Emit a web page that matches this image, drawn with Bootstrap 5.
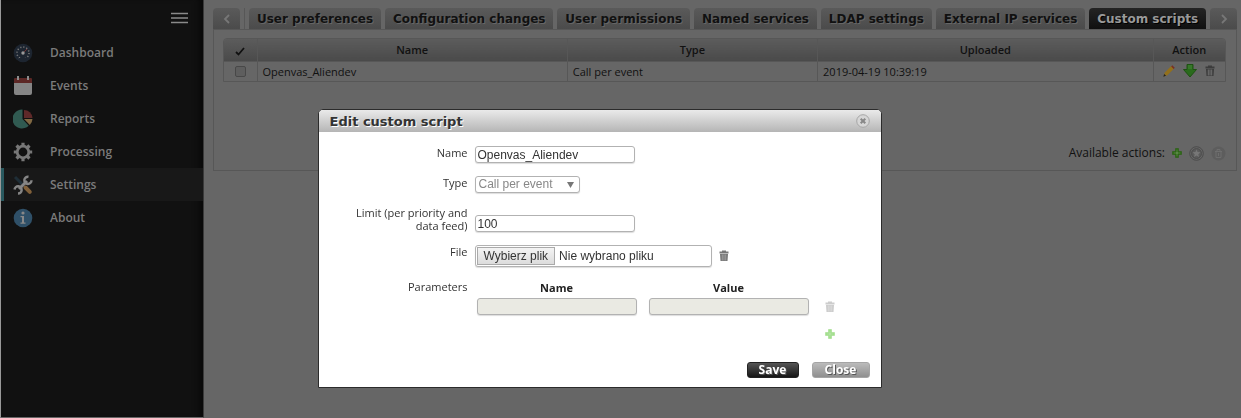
<!DOCTYPE html>
<html lang="en">
<head>
<meta charset="utf-8">
<meta name="viewport" content="width=device-width, initial-scale=1">
<title>Settings – Custom scripts</title>
<link href="https://cdn.jsdelivr.net/npm/bootstrap@5.3.0/dist/css/bootstrap.min.css" rel="stylesheet">
<style>
body{background:#666;color:#111;font:11px/13px "Open Sans","Noto Sans",sans-serif}
/* sidebar */
.side{width:204px;background:#111;border-left:1px solid #999;border-right:1px solid #3a3a3a;border-bottom:1px solid #666;box-shadow:inset -8px 0 6px -4px #0a0a0a}
.burger{height:36px;padding:0 15px 0 0}
.burger button,.icon-btn{background:none;border:0;padding:0;line-height:0}
.side .nav-link{height:33px;gap:17px;padding:0 0 0 12px;color:#7b7b7b;font-size:12px;font-weight:600;line-height:16px}
.side .nav-link.active{background:#181818;border-left:3px solid #29595f;padding-left:9px}
.side svg{flex:none}
/* tabs */
.work{padding:8px 4px 0 9px;min-width:0}
.tabs{gap:4px}
.tabs .nav-link{height:21px;padding:0 7px;border:0;border-radius:4px 4px 0 0;background:linear-gradient(#5a5a5a,#4b4b4b);color:#111;font:bold 12px/22px "DejaVu Sans",Verdana,sans-serif;white-space:nowrap;text-shadow:1px 1px 0 #666}
.tabs .nav-link.active{background:linear-gradient(#242424,#101010);color:#999;text-shadow:1px 1px 0 #000}
.tabs .step{width:27px;flex:none;padding:0;line-height:0}
.tabs .split{border-left:1px solid #575757}
.pane{border:1px solid #575757;padding:8px 10px 9px 9px;min-height:142px}
/* script list */
.list{border:1px solid #575757;border-radius:4px 4px 0 0;overflow:hidden}
.list table{table-layout:fixed;width:100%}
.list th{height:22px;background:linear-gradient(#5c5c5c,#4a4a4a);font-weight:600;text-align:center;border-bottom:1px solid #575757}
.list td{height:20px;padding:0 5px}
.list th+th,.list td+td{border-left:1px solid #575757}
.c-tick{width:33px}.c-name{width:31%}.c-type{width:25%}.c-act{width:72px}
.list input{appearance:none;width:11px;height:11px;border:1px solid #484848;border-radius:2px;background:#5e5e5e;display:block;margin:auto}
.avail{gap:7px;font-size:12px;line-height:16px}
/* dialog */
.veil{padding:109px 42px 0 0;pointer-events:none}
.dlg{width:564px;border:1px solid #2b2b2b;border-radius:5px 5px 0 0;background:#fff;overflow:hidden;pointer-events:auto}
.dlg-head{height:22px;padding:0 11px;background:linear-gradient(#eaeaea,#b5b5b5)}
.dlg-head h1{font:bold 13px/21px "DejaVu Sans",Verdana,sans-serif;color:#333;margin:0;text-shadow:1px 1px 0 #fff}
.dlg-body{padding:14px 11px 9px 0;gap:13px;color:#333}
.line{gap:7px}
.line>.cap{width:149px;padding-left:28px;text-align:right;flex:none}
.field{height:17px;width:160px;padding:0 2px;border:1px solid #b2b2b2;border-radius:3px;font:12px/15px "Liberation Sans",Arial,sans-serif;color:#333;background:#fff;box-shadow:0 1px 1px #ddd}
.field:disabled{background-color:#eaeae3}
select.field{width:105px;appearance:none;padding:0 3px;opacity:1}
select.field:disabled{color:#888;background:#fff url("data:image/svg+xml,%3Csvg xmlns='http://www.w3.org/2000/svg' width='7' height='6'%3E%3Cpath fill='%23777' d='M0 0h7L3.500 6z'/%3E%3C/svg%3E") no-repeat right 5px center}
.picker{height:22px;width:237px;padding:1px;gap:4px}
.picker .pick{border:1px solid #aaa;background:linear-gradient(#f4f4f4,#dcdcdc);padding:0 6px;height:18px;line-height:17px}
.params{gap:2px 12px;grid-template-columns:160px 160px 1fr;margin-left:2px}
.params b{line-height:16px;text-align:center;color:#222}
.act{height:16px;border:1px solid #888;border-radius:3px;padding:0;color:#fff;font:bold 12px/14px "Open Sans","Noto Sans",sans-serif;text-shadow:1px 1px 0 #555}
.save{width:52px;border-color:#222;background:linear-gradient(#555,#161616)}
.close-act{width:58px;border-color:#a5a5a5;background:linear-gradient(#bbb,#8f8f8f)}
.acts{gap:13px;margin-top:10px}
</style>
</head>
<body>
<svg class="d-none">
<symbol id="bin" viewBox="0 0 10 12"><path d="M3 1.500V.5h4v1h2.500v2h-9v-2zM1 4h8l-.5 7h-7z"/><path d="M3.300 4.500v6M5 4.500v6M6.700 4.500v6" stroke="#fff" stroke-opacity=".35" stroke-width=".8"/></symbol>
<symbol id="plus" viewBox="0 0 10 10"><path d="M3.500.5h3v3h3v3h-3v3h-3v-3h-3v-3h3z" fill="currentColor" stroke="currentColor" stroke-opacity=".5"/><path d="M5 1.500v7M1.500 5h7" stroke="#fff" stroke-opacity=".25"/></symbol>
</svg>
<div class="d-flex min-vh-100">
<aside class="side flex-shrink-0">
  <div class="burger d-flex justify-content-end align-items-center"><button aria-label="Toggle menu"><svg width="17" height="12"><path d="M0 1.500h17M0 6h17M0 10.500h17" stroke="#8a8a8a" stroke-width="1.500"/></svg></button></div>
  <nav class="nav flex-column">
    <a class="nav-link d-flex align-items-center" href="#"><svg width="20" height="20" viewBox="0 0 20 20"><circle cx="10" cy="10" r="9.300" fill="#1d2530"/><circle cx="10" cy="10" r="6" fill="none" stroke="#777" stroke-width="1.500" stroke-dasharray="1.200 2" pathLength="38"/><path d="M6 15h8v2H6z" fill="#1d2530"/><path d="m10 10 4-4" stroke="#703232"/><circle cx="10" cy="10" r="1.700" fill="#999"/></svg>Dashboard</a>
    <a class="nav-link d-flex align-items-center" href="#"><svg width="20" height="20" viewBox="0 0 20 20"><path d="M1 3q0-1 1-1h16q1 0 1 1v5H1z" fill="#5c2725"/><path d="M1 7h18v10q0 2-2 2H3q-2 0-2-2z" fill="#858585"/><path d="M5 0v4M15 0v4" stroke="#8c8c8c" stroke-width="2"/></svg>Events</a>
    <a class="nav-link d-flex align-items-center" href="#"><svg width="20" height="20" viewBox="0 0 20 20"><path d="M9.500.5a9.500 9.500 0 1 0 6.200 16.200L9.500 10z" fill="#305a51"/><path d="M11 1v8h8.500A8.500 8.500 0 0 0 11 1z" fill="#5e2929"/><path d="M11 10h8.500q-.2 3.500-2.700 6z" fill="#806843"/></svg>Reports</a>
    <a class="nav-link d-flex align-items-center" href="#"><svg width="20" height="20" viewBox="0 0 20 20"><path d="M10 .8v18.400M.8 10h18.400M3.500 3.500l13 13M16.500 3.500l-13 13" stroke="#777" stroke-width="3.200"/><circle cx="10" cy="10" r="5.800" fill="#111" stroke="#777" stroke-width="2.800"/></svg>Processing</a>
    <a class="nav-link active d-flex align-items-center" href="#" aria-current="page"><svg width="20" height="20" viewBox="0 0 20 20"><path d="m2 2 7 7" stroke="#1f2e37" stroke-width="3"/><path d="m12.500 12.500 4.300 4.300" stroke="#80603a" stroke-width="4" stroke-linecap="round"/><path d="M6 14 14 6" stroke="#858585" stroke-width="3"/><path d="M15.500 1.800a3.600 3.600 0 1 0 3 3.500M1.500 14.500a3.600 3.600 0 1 1 3.500 4" fill="none" stroke="#858585" stroke-width="2.400"/></svg>Settings</a>
    <a class="nav-link d-flex align-items-center" href="#"><svg width="20" height="20" viewBox="0 0 20 20"><circle cx="10" cy="10" r="9.300" fill="#2f5068"/><circle cx="10" cy="5" r="1.600" fill="#888"/><path d="M7.500 8H11v6.500h1.500v1.300h-5v-1.300H9V9.300H7.500z" fill="#888"/></svg>About</a>
  </nav>
</aside>
<main class="work flex-grow-1">
  <div class="tabs nav flex-nowrap">
    <button class="nav-link step" aria-label="Previous tabs"><svg width="8" height="10"><path d="M6 1 2 5l4 4" fill="none" stroke="#777" stroke-width="1.800"/></svg></button>
    <span class="split"></span>
    <button class="nav-link flex-fill">User preferences</button>
    <button class="nav-link flex-fill">Configuration changes</button>
    <button class="nav-link flex-fill">User permissions</button>
    <button class="nav-link flex-fill">Named services</button>
    <button class="nav-link flex-fill">LDAP settings</button>
    <button class="nav-link flex-fill">External IP services</button>
    <button class="nav-link flex-fill active">Custom scripts</button>
    <button class="nav-link step" aria-label="Next tabs"><svg width="8" height="10"><path d="m2 1 4 4-4 4" fill="none" stroke="#777" stroke-width="1.800"/></svg></button>
  </div>
  <section class="pane d-flex flex-column">
    <div class="list"><table>
      <colgroup><col class="c-tick"><col class="c-name"><col class="c-type"><col><col class="c-act"></colgroup>
      <thead><tr><th aria-label="Selected"><svg width="10" height="9"><path d="m1 5 2.500 2.500L9 1" fill="none" stroke="#111" stroke-width="1.800"/></svg></th><th>Name</th><th>Type</th><th>Uploaded</th><th>Action</th></tr></thead>
      <tbody><tr><td><input type="checkbox" aria-label="Select Openvas_Aliendev"></td><td>Openvas_Aliendev</td><td>Call per event</td><td>2019-04-19 10:39:19</td>
      <td><div class="d-flex align-items-center justify-content-center gap-2">
        <button class="icon-btn" aria-label="Edit"><svg width="12" height="12" viewBox="0 0 11 11"><path d="m.5 10.500 1-3.500 6-6L10 3.500l-6 6z" fill="#92701c"/><path d="m7.500 1.300 1-1 2.300 2.300-1 1z" fill="#7a2f22"/><path d="m.3 10.700.8-2.500 1.700 1.700z" fill="#222"/></svg></button>
        <button class="icon-btn" aria-label="Download"><svg width="14" height="14" viewBox="0 0 14 14"><path d="M4 .5h6v5h3.500L7 13 .5 5.500H4z" fill="#2a6b1c" stroke="#1e5213"/><path d="M5 2h4M5 4h4" stroke="#458638"/></svg></button>
        <button class="icon-btn" aria-label="Delete"><svg width="10" height="12" fill="#3c3c3c"><use href="#bin"/></svg></button>
      </div></td></tr></tbody>
    </table></div>
    <div class="avail d-flex align-items-center justify-content-end mt-auto">Available actions:
      <button class="icon-btn" aria-label="Add"><svg width="10" height="10" color="#25620c"><use href="#plus"/></svg></button>
      <button class="icon-btn" aria-label="Favourite"><svg width="15" height="15" viewBox="0 0 15 15"><circle cx="7.500" cy="7.500" r="6.800" fill="none" stroke="#4c4c4c"/><circle cx="7.500" cy="7.500" r="4.900" fill="#5c5c5c" stroke="#4c4c4c"/><path d="m7.500 3.500 1.100 2.600 2.900.2-2.200 1.900.7 2.800-2.500-1.500L5 11l.7-2.800-2.200-1.900 2.900-.2z" fill="#777"/></svg></button>
      <button class="icon-btn" aria-label="Delete selected"><svg width="15" height="15" viewBox="0 0 15 15"><circle cx="7.500" cy="7.500" r="7" fill="#5d5d5d"/><path d="M4 5.500h7M6 5V3.500h3V5M5 6v5.500h5V6M7.500 7v3" fill="none" stroke="#6e6e6e"/></svg></button>
    </div>
  </section>
</main>
</div>

<div class="veil position-fixed top-0 start-0 w-100 d-flex justify-content-center">
<div class="dlg" role="dialog" aria-labelledby="dlg-title">
  <div class="dlg-head d-flex align-items-center justify-content-between"><h1 id="dlg-title">Edit custom script</h1>
    <button class="icon-btn" aria-label="Close dialog"><svg width="14" height="14" viewBox="0 0 14 14"><circle cx="7" cy="7" r="6.300" fill="#d6d6d6" stroke="#a6a6a6"/><path d="m4.700 4.700 4.600 4.600m0-4.600L4.700 9.300" stroke="#888" stroke-width="2"/></svg></button></div>
  <form class="dlg-body d-flex flex-column">
    <div class="line d-flex"><label class="cap" for="f-name">Name</label><input class="field" id="f-name" type="text" value="Openvas_Aliendev"></div>
    <div class="line d-flex"><label class="cap" for="f-type">Type</label><select class="field" id="f-type" disabled><option>Call per event</option></select></div>
    <div class="line d-flex align-items-end"><label class="cap" for="f-limit">Limit (per priority and data feed)</label><input class="field" id="f-limit" type="text" value="100"></div>
    <div class="line d-flex"><label class="cap" for="f-file">File</label>
      <label class="field picker d-flex align-items-center" for="f-file"><span class="pick">Wybierz plik</span><span>Nie wybrano pliku</span><input class="visually-hidden" id="f-file" type="file"></label>
      <button class="icon-btn align-self-center" type="button" aria-label="Remove file"><svg width="10" height="12" fill="#777"><use href="#bin"/></svg></button></div>
    <div class="line d-flex"><span class="cap">Parameters</span>
      <div class="params d-grid flex-grow-1 align-items-center"><b>Name</b><b>Value</b><span></span>
        <input class="field" type="text" disabled aria-label="Parameter name"><input class="field" type="text" disabled aria-label="Parameter value">
        <div class="d-flex ps-1"><button class="icon-btn" type="button" aria-label="Remove parameter"><svg width="10" height="12" fill="#ccc"><use href="#bin"/></svg></button></div>
        <span></span><span></span><div class="d-flex ps-1 mt-2 pt-1"><button class="icon-btn" type="button" aria-label="Add parameter"><svg width="10" height="10" color="#9cdc86"><use href="#plus"/></svg></button></div>
      </div></div>
    <div class="acts d-flex justify-content-end"><button class="act save" type="button">Save</button><button class="act close-act" type="button">Close</button></div>
  </form>
</div>
</div>
<script src="https://cdn.jsdelivr.net/npm/bootstrap@5.3.0/dist/js/bootstrap.bundle.min.js"></script>
</body>
</html>
